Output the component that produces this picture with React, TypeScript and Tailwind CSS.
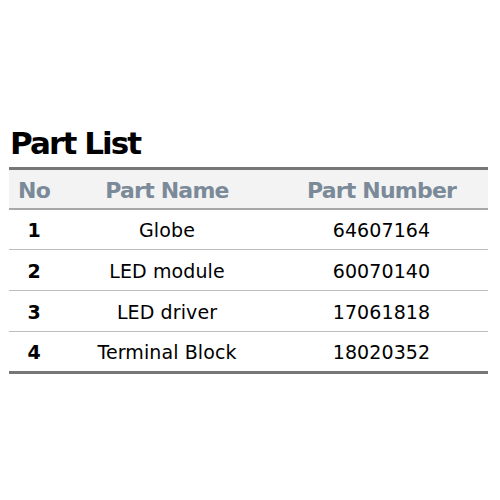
import React from 'react';

interface Part {
  no: number;
  name: string;
  number: string;
}

const parts: Part[] = [
  { no: 1, name: 'Globe', number: '64607164' },
  { no: 2, name: 'LED module', number: '60070140' },
  { no: 3, name: 'LED driver', number: '17061818' },
  { no: 4, name: 'Terminal Block', number: '18020352' },
];

export default function App() {
  return (
    <div className="w-[500px] h-[500px] bg-white pt-[124px] pl-[9px] pr-[12px] font-['DejaVu_Sans',sans-serif] text-black">
      <h2 className="pl-px text-[31px] leading-[38px] font-bold tracking-[-1.9px] mb-[5px]">Part List</h2>
      <table className="w-full border-collapse">
        <thead>
          <tr className="bg-[#f2f3f2] border-t-[3px] border-t-[#777777] border-b-2 border-b-[#a8a8a8]">
            <th className="w-[50px] h-[40px] pt-[3px] text-[22px] font-bold text-[#7b8a99] tracking-[-0.8px]">No</th>
            <th className="w-[216px] h-[40px] pt-[3px] text-[22px] font-bold text-[#7b8a99] tracking-[-0.8px]">Part Name</th>
            <th className="h-[40px] pt-[3px] text-[22px] font-bold text-[#7b8a99] tracking-[-0.8px]">Part Number</th>
          </tr>
        </thead>
        <tbody>
          {parts.map((p, i) => (
            <tr
              key={p.no}
              className={i === parts.length - 1 ? 'border-b-[3px] border-b-[#777777]' : 'border-b border-b-[#bdbdbd]'}
            >
              <td className="h-[41px] pt-[2px] text-center text-[19px] font-bold">{p.no}</td>
              <td className="h-[41px] pt-[2px] text-center text-[19px] tracking-[0.1px]">{p.name}</td>
              <td className="h-[41px] pt-[2px] text-center text-[19px] tracking-[0.1px]">{p.number}</td>
            </tr>
          ))}
        </tbody>
      </table>
    </div>
  );
}
